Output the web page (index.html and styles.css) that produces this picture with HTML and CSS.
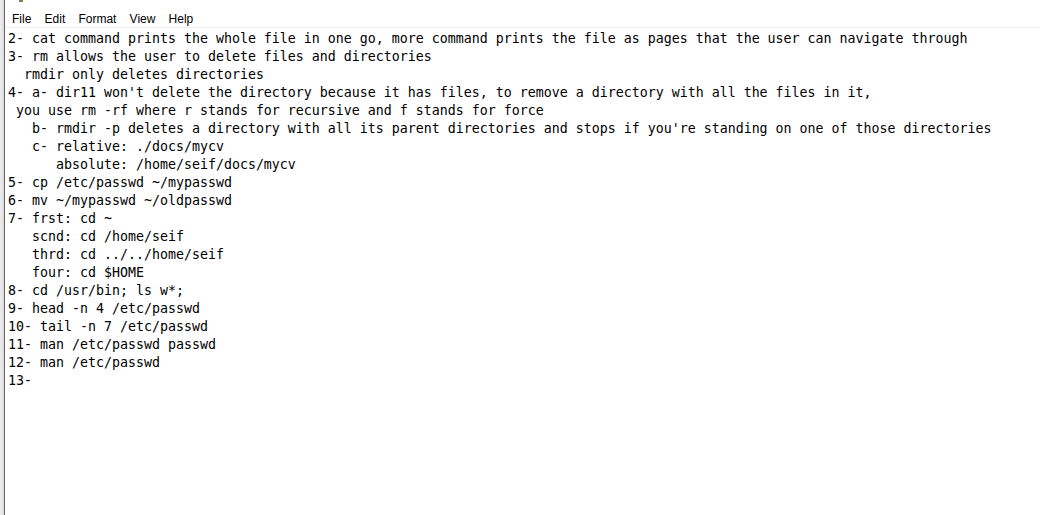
FILE: index.html
```html
<!DOCTYPE html>
<html>
<head>
<meta charset="utf-8">
<link rel="stylesheet" href="styles.css">
</head>
<body>
<div class="frame">
  <div class="edge"></div>
  <div class="main">
    <div class="titlestrip"><span class="icon-bit"></span></div>
    <nav class="menubar">
      <span class="menu-item">File</span>
      <span class="menu-item">Edit</span>
      <span class="menu-item">Format</span>
      <span class="menu-item">View</span>
      <span class="menu-item">Help</span>
    </nav>
    <pre class="editor">2- cat command prints the whole file in one go, more command prints the file as pages that the user can navigate through
3- rm allows the user to delete files and directories
  rmdir only deletes directories
4- a- dir11 won't delete the directory because it has files, to remove a directory with all the files in it,
 you use rm -rf where r stands for recursive and f stands for force
   b- rmdir -p deletes a directory with all its parent directories and stops if you're standing on one of those directories
   c- relative: ./docs/mycv
      absolute: /home/seif/docs/mycv
5- cp /etc/passwd ~/mypasswd
6- mv ~/mypasswd ~/oldpasswd
7- frst: cd ~
   scnd: cd /home/seif
   thrd: cd ../../home/seif
   four: cd $HOME
8- cd /usr/bin; ls w*;
9- head -n 4 /etc/passwd
10- tail -n 7 /etc/passwd
11- man /etc/passwd passwd
12- man /etc/passwd
13-</pre>
  </div>
</div>
</body>
</html>
```

FILE: styles.css
```css
html, body {
  margin: 0;
  padding: 0;
  background: #ffffff;
}
body {
  width: 1040px;
  height: 515px;
  overflow: hidden;
}
.frame {
  display: flex;
  height: 515px;
}
.edge {
  width: 4px;
  background: linear-gradient(to right, #efefef, #dadada);
  flex: none;
}
.main {
  flex: 1;
  border-left: 1px solid #646464;
  display: flex;
  flex-direction: column;
  min-width: 0;
}
.titlestrip {
  height: 10px;
  display: flex;
  align-items: flex-start;
}
.icon-bit {
  display: block;
  width: 4px;
  height: 2px;
  margin-left: 14px;
  background: #8a7a4a;
}
.menubar {
  display: flex;
  height: 16px;
  padding-top: 1px;
  border-bottom: 1px solid #f0f0f0;
  font-family: "Liberation Sans", Arial, sans-serif;
  font-size: 12px;
  line-height: 17px;
  color: #000;
  overflow: hidden;
}
.menu-item {
  padding: 0 6.6px;
}
.menu-item:first-child {
  padding-left: 7px;
}
.editor {
  margin: 0;
  padding: 2px 0 0 3px;
  font-family: "DejaVu Sans Mono", monospace;
  font-size: 13.29px;
  line-height: 18px;
  color: #000;
  white-space: pre;
}
```
